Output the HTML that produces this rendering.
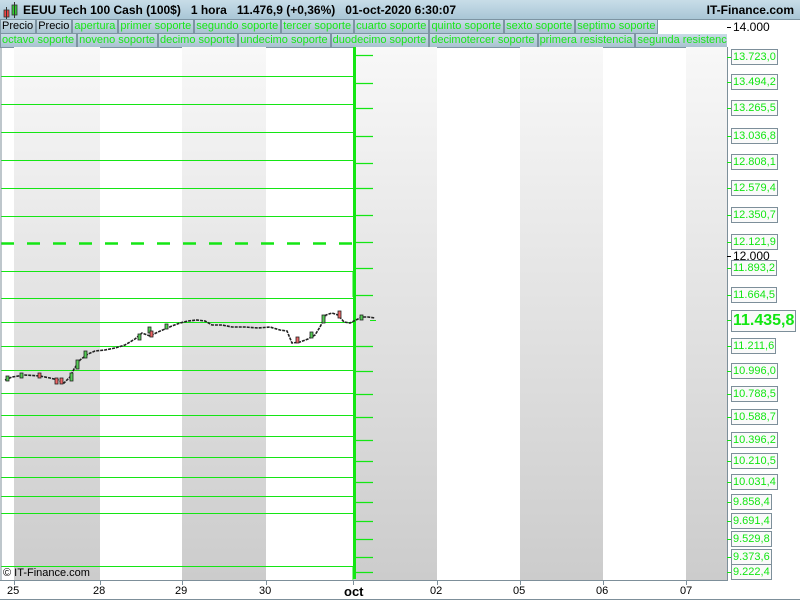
<!DOCTYPE html>
<html><head><meta charset="utf-8"><style>
*{margin:0;padding:0;box-sizing:border-box}
body{width:800px;height:600px;overflow:hidden;background:#fff;font-family:"Liberation Sans",sans-serif;position:relative}
.hdr{position:absolute;left:0;top:0;width:800px;height:20px;background:linear-gradient(#c8dde8,#a9c6d6);border-bottom:1px solid #7d94a2;font-weight:bold;font-size:12px;line-height:20px}
.row{position:absolute;left:0;height:14px;font-size:11px;line-height:13px;white-space:nowrap;overflow:hidden;display:flex;flex-wrap:nowrap}
.row span{flex:none;background:linear-gradient(#c9dce6,#a8c2d0);border:1px solid #7d94a2;border-top:0;color:#19e619;padding:0 2px 0 1px;height:14px}
.row span.b{color:#000}
.lab{position:absolute;left:731px;height:16px;border:1px solid #7d8f9a;background:#fafafa;color:#12e612;font-size:11px;line-height:14px;padding:0 1px}
.tick{position:absolute;left:727px;width:4px;height:1px;background:#12e612}
.ax{position:absolute;top:585px;font-size:11px}
</style></head><body>
<div class="hdr"><svg style="position:absolute;left:3px;top:2px" width="16" height="17"><rect x="1" y="8" width="5" height="7" fill="#e44" stroke="#333" stroke-width="0.8"/><line x1="3.5" y1="5" x2="3.5" y2="17" stroke="#333"/><rect x="9" y="3" width="5" height="10" fill="#3c3" stroke="#333" stroke-width="0.8"/><line x1="11.5" y1="0" x2="11.5" y2="16" stroke="#333"/></svg>
<span style="position:absolute;left:23px">EEUU Tech 100 Cash (100$)&nbsp;&nbsp;&nbsp;1 hora&nbsp;&nbsp;&nbsp;11.476,9 (+0,36%)&nbsp;&nbsp;&nbsp;01-oct-2020 6:30:07</span>
<span style="position:absolute;right:6px">IT-Finance.com</span></div>
<div class="row" style="top:20px;width:700px"><span class="b">Precio</span><span class="b">Precio</span><span>apertura</span><span>primer soporte</span><span>segundo soporte</span><span>tercer soporte</span><span>cuarto soporte</span><span>quinto soporte</span><span>sexto soporte</span><span>septimo soporte</span></div>
<div class="row" style="top:34px;width:727px"><span>octavo soporte</span><span>noveno soporte</span><span>decimo soporte</span><span>undecimo soporte</span><span>duodecimo soporte</span><span>decimotercer soporte</span><span>primera resistencia</span><span>segunda resistencia</span></div>
<svg style="position:absolute;left:0;top:47px" width="800" height="553">
<defs><linearGradient id="g" x1="0" y1="0" x2="0" y2="1"><stop offset="0" stop-color="#f8f8f8"/><stop offset="1" stop-color="#cccccc"/></linearGradient></defs>
<rect x="14" y="0" width="86" height="533" fill="url(#g)"/>
<rect x="182" y="0" width="84" height="533" fill="url(#g)"/>
<rect x="354" y="0" width="83" height="533" fill="url(#g)"/>
<rect x="520" y="0" width="83" height="533" fill="url(#g)"/>
<rect x="686" y="0" width="41" height="533" fill="url(#g)"/>
<g stroke="#14e614" stroke-width="1" fill="none">
<path d="M1 29.5H354M1 57.5H354M1 85.5H354M1 113.5H354M1 141.5H354M1 169.5H354M1 224.5H353V250M1 251.5H354M1 275.5H354M1 299.5H354M1 323.5H354M1 346.5H354M1 368.5H354M1 389.5H354M1 410.5H354M1 430.5H354M1 449.5H354M1 466.5H354M1 519.5H353V533"/>
<path d="M1 196.5H354" stroke-width="2.5" stroke-dasharray="13 13"/>
<path d="M356 8.5H373M356 36.5H373M356 61.5H373M356 89.5H373M356 116.5H373M356 141.5H373M356 168.5H373M356 195.5H373M356 221.5H373M356 248.5H373M356 299.5H373M356 324.5H373M356 347.5H373M356 370.5H373M356 393.5H373M356 414.5H373M356 435.5H373M356 455.5H373M356 474.5H373M356 492.5H373M356 510.5H373M356 525.5H373" stroke-width="1.3"/>
<path d="M354.5 0V532" stroke-width="3"/>
<path d="M370 273.5h6"/>
</g>
<polyline fill="none" stroke="#222" stroke-width="1.6" stroke-dasharray="3 1" points="5,333 12,330 25,328 40,329 50,331 58,333 64,336 70,330 74,322 80,313 88,307 95,304 105,303 115,301 125,298 135,292 142,286 150,289 158,285 165,282 172,279 180,276 188,274 197,273 205,274 212,278 222,278 232,280 245,280 258,281 270,280 280,283 287,284 292,296 300,295 308,292 315,288 320,280 326,268 332,266 338,268 344,275 350,276 358,272 362,270 368,270 375,271"/>
<g fill="#5c5" stroke="#222" stroke-width="0.8"><rect x="6" y="329" width="3" height="5"/><rect x="20" y="326" width="3" height="5"/><rect x="70" y="326" width="3" height="8"/><rect x="76" y="313" width="3" height="9"/><rect x="84" y="304" width="3" height="7"/><rect x="138" y="287" width="3" height="6"/><rect x="148" y="280" width="3" height="6"/><rect x="165" y="277" width="3" height="5"/><rect x="310" y="285" width="3" height="6"/><rect x="322" y="268" width="3" height="8"/><rect x="360" y="268" width="3" height="5"/></g>
<g fill="#e66" stroke="#222" stroke-width="0.8"><rect x="38" y="326" width="3" height="5"/><rect x="55" y="331" width="3" height="6"/><rect x="60" y="331" width="3" height="6"/><rect x="150" y="284" width="3" height="6"/><rect x="296" y="290" width="3" height="6"/><rect x="338" y="264" width="3" height="7"/></g>
<path d="M1 0V533M727.5 0V533.5H0M0 552.5H800" stroke="#7d8f9a" fill="none"/>
<path d="M14.5 533v5M100.5 533v5M182.5 533v5M266.5 533v5M353.5 533v5M437.5 533v5M520.5 533v5M603.5 533v5M686.5 533v5" stroke="#7d8f9a"/>
</svg>
<div class="tick" style="top:27px;background:#000"></div><div style="position:absolute;left:733px;top:20px;font-size:12px">14.000</div>
<div class="tick" style="top:256px;background:#000"></div><div style="position:absolute;left:733px;top:249px;font-size:12px">12.000</div>
<div class="lab" style="top:49px">13.723,0</div>
<div class="lab" style="top:74px">13.494,2</div>
<div class="lab" style="top:100px">13.265,5</div>
<div class="lab" style="top:128px">13.036,8</div>
<div class="lab" style="top:154px">12.808,1</div>
<div class="lab" style="top:180px">12.579,4</div>
<div class="lab" style="top:207px">12.350,7</div>
<div class="lab" style="top:234px">12.121,9</div>
<div class="lab" style="top:260px">11.893,2</div>
<div class="lab" style="top:287px">11.664,5</div>
<div class="lab" style="top:310px;height:22px;font-size:16px;font-weight:bold;line-height:20px">11.435,8</div>
<div class="lab" style="top:338px">11.211,6</div>
<div class="lab" style="top:363px">10.996,0</div>
<div class="lab" style="top:386px">10.788,5</div>
<div class="lab" style="top:409px">10.588,7</div>
<div class="lab" style="top:432px">10.396,2</div>
<div class="lab" style="top:453px">10.210,5</div>
<div class="lab" style="top:474px">10.031,4</div>
<div class="lab" style="top:494px">9.858,4</div>
<div class="lab" style="top:513px">9.691,4</div>
<div class="lab" style="top:531px">9.529,8</div>
<div class="lab" style="top:549px">9.373,6</div>
<div class="lab" style="top:564px">9.222,4</div>
<div class="tick" style="top:57px"></div><div class="tick" style="top:82px"></div><div class="tick" style="top:108px"></div><div class="tick" style="top:136px"></div><div class="tick" style="top:162px"></div><div class="tick" style="top:188px"></div><div class="tick" style="top:215px"></div><div class="tick" style="top:242px"></div><div class="tick" style="top:268px"></div><div class="tick" style="top:295px"></div><div class="tick" style="top:320px"></div><div class="tick" style="top:346px"></div><div class="tick" style="top:371px"></div><div class="tick" style="top:394px"></div><div class="tick" style="top:417px"></div><div class="tick" style="top:440px"></div><div class="tick" style="top:461px"></div><div class="tick" style="top:482px"></div><div class="tick" style="top:502px"></div><div class="tick" style="top:521px"></div><div class="tick" style="top:539px"></div><div class="tick" style="top:557px"></div><div class="tick" style="top:572px"></div>
<div style="position:absolute;left:3px;top:567px;font-size:11px">© IT-Finance.com</div>
<div class="ax" style="left:7px">25</div><div class="ax" style="left:93px">28</div><div class="ax" style="left:175px">29</div><div class="ax" style="left:259px">30</div>
<div class="ax" style="left:344px;font-weight:bold;font-size:13px;top:584px">oct</div>
<div class="ax" style="left:430px">02</div><div class="ax" style="left:513px">05</div><div class="ax" style="left:596px">06</div><div class="ax" style="left:680px">07</div>
</body></html>
